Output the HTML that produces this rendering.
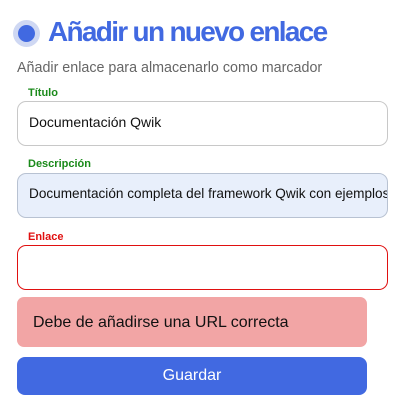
<!DOCTYPE html>
<html><head><meta charset="utf-8"><style>
body{margin:0;width:415px;height:417px;background:#fff;font-family:"Liberation Sans",sans-serif;position:relative;overflow:hidden}
.a{position:absolute}
.lbl{font-size:11px;font-weight:bold;left:28px}
.in{left:17px;height:45px;border:1px solid #c8c8c8;border-radius:9px;box-sizing:border-box;width:371px;font-size:14px;color:#111;padding:12px 0 0 11px;white-space:nowrap;overflow:hidden}
</style></head><body>
<div class="a" style="left:13px;top:20px;width:27px;height:27px;border-radius:50%;background:#cfd8f3"></div>
<div class="a" style="left:18px;top:25px;width:17px;height:17px;border-radius:50%;background:#4169e1"></div>
<div class="a" style="left:48px;top:16px;font-size:28px;font-weight:bold;color:#4169e1;letter-spacing:-1.7px">Añadir un nuevo enlace</div>
<div class="a" style="left:17px;top:60px;font-size:14.3px;color:#666">Añadir enlace para almacenarlo como marcador</div>
<div class="a lbl" style="top:87px;color:#1a8a1a">Título</div>
<div class="a in" style="top:101px">Documentación Qwik</div>
<div class="a lbl" style="top:158px;color:#1a8a1a">Descripción</div>
<div class="a in" style="top:173px;background:#e8effb;border-color:#b8c2d2;font-size:13.6px">Documentación completa del framework Qwik con ejemplos</div>
<div class="a lbl" style="top:231px;color:#e01010">Enlace</div>
<div class="a in" style="top:245px;border-color:#e01010"></div>
<div class="a" style="left:17px;top:297px;width:350px;height:50px;background:#f2a5a5;border-radius:7px;font-size:16px;color:#111;box-sizing:border-box;padding:17px 0 0 16px">Debe de añadirse una URL correcta</div>
<div class="a" style="left:17px;top:357px;width:350px;height:38px;background:#4169e1;border-radius:8px;color:#fff;font-size:16px;text-align:center;line-height:37px">Guardar</div>
</body></html>
